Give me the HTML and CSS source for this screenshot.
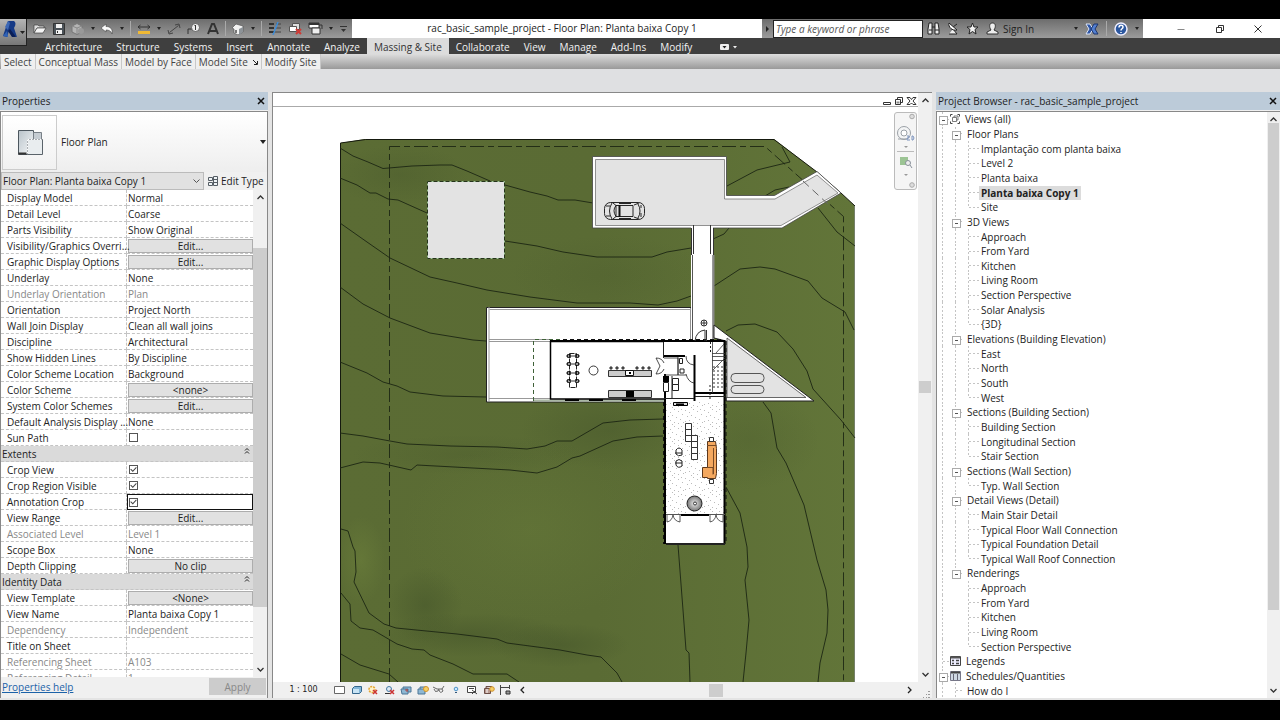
FILE: index.html
```html
<!DOCTYPE html>
<html lang="en">
<head>
<meta charset="utf-8">
<title>rac_basic_sample_project - Floor Plan: Planta baixa Copy 1</title>
<link rel="stylesheet" href="styles.css">
</head>
<body>
<div class="app">
<header class="titlebar">
  <div class="quick">
    <button class="appmenu" aria-label="Application menu"><svg width="26" height="26" viewBox="0 0 26 26"><path d="M3 17L8 2h6q3 2 0 7l3 9-5-1-3-5-2 6z" fill="#163a86"/><path d="M8 2L5 8l3 3 2-7z" fill="#3d68b5"/><path d="M10 10l6 8h-4l-4-6z" fill="#0b1f57"/><path d="M3 17l4-5 1 6z" fill="#2f62b5"/><path d="M20 12h5l-2.500 3z" fill="#222"/></svg></button>
    <button aria-label="Open"><svg width="14" height="12" viewBox="0 0 14 12"><path d="M1 10V2h4l1 1h5v2H4z" fill="#ddd" stroke="#444" stroke-width=".7"/><path d="M1 10l3-5h9l-3 5z" fill="#f4f4f4" stroke="#444" stroke-width=".7"/></svg></button>
    <button aria-label="Save"><svg width="12" height="12" viewBox="0 0 12 12"><path d="M.5.500h11v11H.5z" fill="#4b5258" stroke="#333"/><path d="M3 1h6v4H3zM3 7h6v4H3z" fill="#f1f1f1"/><path d="M4 8h1v2H4z" fill="#333"/></svg></button>
    <button aria-label="Synchronize"><svg width="14" height="12" viewBox="0 0 14 12"><path d="M1 3l5-2.500L11 3v6l-5 2.500L1 9z" fill="#b5b5b5" stroke="#777"/><path d="M1 3l5 2 5-2M6 5v6" fill="none" stroke="#888"/><circle cx="10" cy="8" r="3" fill="#999"/></svg></button>
    <span class="caret"></span>
    <button aria-label="Undo"><svg width="14" height="12" viewBox="0 0 14 12"><path d="M1 5l5-4v2.500c4 0 7 2 6 7.500-1-3-3-4-6-4V9z" fill="#fafafa" stroke="#444" stroke-width=".6"/></svg></button>
    <span class="caret"></span><span class="bar"></span>
    <button aria-label="Measure"><svg width="14" height="12" viewBox="0 0 14 12"><path d="M1 8h12v3H1z" fill="#f0b934"/><path d="M1 4h12M3.500 2L1 4l2.500 2M10.500 2L13 4l-2.500 2" fill="none" stroke="#333"/></svg></button>
    <span class="caret"></span>
    <button aria-label="Aligned dimension"><svg width="14" height="12" viewBox="0 0 14 12"><path d="M2.500 9.500l9-7M8 2l4-1 1 4M1 7l1 4 4-1" fill="none" stroke="#444"/></svg></button>
    <button aria-label="Tag by category"><svg width="14" height="12" viewBox="0 0 14 12"><path d="M1 11V6h4" fill="none" stroke="#333"/><circle cx="8.500" cy="4.500" r="4" fill="#eee" stroke="#444" stroke-width=".7"/><path d="M7.500 3l1-1v5" fill="none" stroke="#333"/></svg></button>
    <button aria-label="Text"><svg width="12" height="12" viewBox="0 0 12 12"><path d="M1 11L5 1h2l4 10M3 8h6" fill="none" stroke="#333" stroke-width="2"/></svg></button>
    <span class="bar"></span>
    <button aria-label="Default 3D view"><svg width="14" height="12" viewBox="0 0 14 12"><path d="M1 5l4-4 7 2v6l-5 3-4-2V6z" fill="#f2f2f2" stroke="#555" stroke-width=".7"/><path d="M8 6l4-2v5l-4 3z" fill="#8d9398"/><path d="M4 7h2v3H4z" fill="#777"/></svg></button>
    <span class="caret"></span><span class="bar"></span>
    <button aria-label="Thin lines"><svg width="14" height="13" viewBox="0 0 14 13"><path d="M1 2h5M1 6h5M1 10h5" stroke="#333" stroke-width="2"/><path d="M8 2h5M7 6h6M6 10h7" stroke="#444"/><path d="M10 0L5 13" stroke="#3f8dd8" stroke-width="1.500"/></svg></button>
    <button aria-label="Close hidden windows"><svg width="14" height="13" viewBox="0 0 14 13"><path d="M4.500 1.500h7v6h-7z" fill="#ddd" stroke="#555"/><path d="M1.500 4.500h7v5h-7z" fill="#fff" stroke="#555"/><path d="M8 7l5 5M13 7l-5 5" stroke="#cf3b36" stroke-width="2"/></svg></button>
    <button aria-label="Switch windows"><svg width="15" height="13" viewBox="0 0 15 13"><path d="M1 1h10v5H1z" fill="#fff" stroke="#333"/><path d="M1 1h10v2H1z" fill="#333"/><path d="M4 6h8v6H4z" fill="#eee" stroke="#333"/><path d="M11 3h3v4" fill="none" stroke="#333"/></svg></button>
    <span class="caret"></span>
    <button aria-label="Customize toolbar"><svg width="9" height="9" viewBox="0 0 9 9"><path d="M1 2.500h7" stroke="#333"/><path d="M2 5h5L4.500 8z" fill="#333"/></svg></button>
  </div>
  <h1>rac_basic_sample_project - Floor Plan: Planta baixa Copy 1</h1>
  <div class="info">
    <span class="arrow"></span>
    <input type="text" aria-label="Search" placeholder="Type a keyword or phrase">
    <button aria-label="Search"><svg width="13" height="13" viewBox="0 0 13 13"><path d="M1 12V7l1-6h3v11zM8 12V1h3l1 6v5zM5 5h3" fill="#eee" stroke="#222"/><path d="M2 8h3M8 8h4" stroke="#222"/></svg></button>
    <button aria-label="Subscription"><svg width="12" height="13" viewBox="0 0 12 13"><path d="M2 12h8L6 7M6 5l4-3" fill="#eee" stroke="#222"/><path d="M2 1c-1 4 3 8 8 7z" fill="#fff" stroke="#222"/></svg></button>
    <button aria-label="Favorites"><svg width="13" height="13" viewBox="0 0 13 13"><path d="M6.500 1l1.500 4h4L9 7.500l1 4.500-3.500-2.500L3 12l1-4.500L1 5h4z" fill="#f1f1f1" stroke="#222"/></svg></button>
    <button class="signin"><svg width="13" height="13" viewBox="0 0 13 13"><path d="M6.500 1C3 1 3 5 5 8l-4 2v2h11v-2L8 8c2-3 2-7-1.500-7z" fill="#eee" stroke="#333"/></svg>Sign In</button>
    <span class="caret"></span>
    <button aria-label="Exchange apps"><svg width="14" height="12" viewBox="0 0 14 12"><path d="M1 1h4l3 5-3 5H1l3-5z" fill="#2d55a5" stroke="#dce5f7"/><path d="M13 1H9L6 6l3 5h4l-3-5z" fill="#527fd1" stroke="#1d356d"/></svg></button>
    <span class="bar"></span>
    <button aria-label="Help"><svg width="14" height="14" viewBox="0 0 14 14"><circle cx="7" cy="7" r="6" fill="#2b579f" stroke="#eef" stroke-width="1.500"/><path d="M5 5.500c0-3 4-3 4-.5 0 2-2 1.500-2 3.500M7 10v1" fill="none" stroke="#fff" stroke-width="1.500"/></svg></button>
    <span class="caret"></span>
  </div>
  <div class="winbtns">
    <button aria-label="Minimize"><svg width="10" height="10" viewBox="0 0 10 10"><path d="M1.500 5.500h7" stroke="#888"/></svg></button>
    <button aria-label="Restore"><svg width="10" height="10" viewBox="0 0 10 10"><path d="M1.500 3.500h5v5h-5zM3.500 3V1.500h5v5H7" fill="none" stroke="#333"/></svg></button>
    <button aria-label="Close"><svg width="10" height="10" viewBox="0 0 10 10"><path d="M1.500 1.500l7 7M8.500 1.500l-7 7" stroke="#333"/></svg></button>
  </div>
</header>
<nav class="menu">
  <button>Architecture</button><button>Structure</button><button>Systems</button><button>Insert</button><button>Annotate</button><button>Analyze</button><button class="on">Massing &amp; Site</button><button>Collaborate</button><button>View</button><button>Manage</button><button>Add-Ins</button><button>Modify</button>
  <button class="ribbontoggle" aria-label="Minimize ribbon"><svg width="20" height="8" viewBox="0 0 20 8"><rect x="1" y="1" width="9" height="6" rx="1" fill="#eee"/><path d="M3.500 3h4l-2 2.500z" fill="#222"/><path d="M14 3h4l-2 2.500z" fill="#eee"/></svg></button>
</nav>
<div class="ribbon">
  <button>Select</button><button>Conceptual Mass</button><button>Model by Face</button><button>Model Site <svg width="5" height="5" viewBox="0 0 5 5"><path d="M0 0l4 4M4.500 1v3.500H1" fill="none" stroke="#222"/></svg></button><button>Modify Site</button>
</div>
<div class="options"></div>
<main class="work">
  <section class="panel props">
    <header class="panelhead"><h2>Properties</h2><button aria-label="Close properties"><svg width="8" height="8" viewBox="0 0 8 8"><path d="M1 1l6 6M7 1L1 7" stroke="#111" stroke-width="1.500"/></svg></button></header>
    <div class="propbody">
      <div class="type">
        <div class="thumb"><svg width="28" height="28" viewBox="0 0 28 28"><defs><linearGradient id="tg" x2="1" y2="1"><stop stop-color="#b9c3ca"/><stop offset="1" stop-color="#f6f8f9"/></linearGradient></defs><path d="M2.500 2.500h15v9h-6v15h-9z" fill="url(#tg)" stroke="#4c565e"/><path d="M17.500 4.500h8v7h-8z" fill="#c5ccd2" stroke="#788087"/><path d="M11.500 11.500h15v15h-15z" fill="#e9edef" stroke="#5a636a"/><path d="M11.500 11.500h15M11.500 11.500v15" stroke="#fff" stroke-dasharray="2 1"/><path d="M2.500 25.500h8" stroke="#333" stroke-width="2"/></svg></div>
        <span>Floor Plan</span><i class="caret"></i>
      </div>
      <div class="instance">
        <div class="selectbox"><select aria-label="Instance"><option>Floor Plan: Planta baixa Copy 1</option></select><svg width="7" height="5" viewBox="0 0 7 5"><path d="M.5.500l3 3 3-3" fill="none" stroke="#555"/></svg></div>
        <button class="edittype"><svg width="12" height="12" viewBox="0 0 12 12"><path d="M1.500 2.500h4v3h-4zM1.500 7.500h4v3h-4zM6.500 1.500h4v9h-4zM6.500 4.500h4M6.500 7.500h4" fill="#eef3f6" stroke="#555d64"/></svg>Edit Type</button>
      </div>
      <div class="gridwrap">
        <div class="gridclip">
        <table class="grid">
          <tr><th>Display Model</th><td>Normal</td></tr>
          <tr><th>Detail Level</th><td>Coarse</td></tr>
          <tr><th>Parts Visibility</th><td>Show Original</td></tr>
          <tr><th>Visibility/Graphics Overri...</th><td><button>Edit...</button></td></tr>
          <tr><th>Graphic Display Options</th><td><button>Edit...</button></td></tr>
          <tr><th>Underlay</th><td>None</td></tr>
          <tr class="dim"><th>Underlay Orientation</th><td>Plan</td></tr>
          <tr><th>Orientation</th><td>Project North</td></tr>
          <tr><th>Wall Join Display</th><td>Clean all wall joins</td></tr>
          <tr><th>Discipline</th><td>Architectural</td></tr>
          <tr><th>Show Hidden Lines</th><td>By Discipline</td></tr>
          <tr><th>Color Scheme Location</th><td>Background</td></tr>
          <tr><th>Color Scheme</th><td><button>&lt;none&gt;</button></td></tr>
          <tr><th>System Color Schemes</th><td><button>Edit...</button></td></tr>
          <tr><th>Default Analysis Display ...</th><td>None</td></tr>
          <tr><th><label for="sun">Sun Path</label></th><td><input id="sun" type="checkbox"></td></tr>
          <tr class="cat"><th colspan="2"><span>Extents<svg width="6" height="8" viewBox="0 0 6 8"><path d="M1 3.500l2-2 2 2M1 6.500l2-2 2 2" fill="none" stroke="#222"/></svg></span></th></tr>
          <tr><th><label for="crop">Crop View</label></th><td><input id="crop" type="checkbox" checked></td></tr>
          <tr><th><label for="region">Crop Region Visible</label></th><td><input id="region" type="checkbox" checked></td></tr>
          <tr class="focus"><th><label for="anno">Annotation Crop</label></th><td><input id="anno" type="checkbox" checked></td></tr>
          <tr><th>View Range</th><td><button>Edit...</button></td></tr>
          <tr class="dim"><th>Associated Level</th><td>Level 1</td></tr>
          <tr><th>Scope Box</th><td>None</td></tr>
          <tr><th>Depth Clipping</th><td><button>No clip</button></td></tr>
          <tr class="cat"><th colspan="2"><span>Identity Data<svg width="6" height="8" viewBox="0 0 6 8"><path d="M1 3.500l2-2 2 2M1 6.500l2-2 2 2" fill="none" stroke="#222"/></svg></span></th></tr>
          <tr><th>View Template</th><td><button>&lt;None&gt;</button></td></tr>
          <tr><th>View Name</th><td>Planta baixa Copy 1</td></tr>
          <tr class="dim"><th>Dependency</th><td>Independent</td></tr>
          <tr><th>Title on Sheet</th><td></td></tr>
          <tr class="dim"><th>Referencing Sheet</th><td>A103</td></tr>
          <tr class="dim"><th>Referencing Detail</th><td>1</td></tr>
        </table>
        </div>
        <div class="vscroll propv"><svg width="7" height="5" viewBox="0 0 7 5"><path d="M.5 4l3-3 3 3" fill="none" stroke="#333" stroke-width="1.300"/></svg><span class="track props-track"><i></i></span><svg width="7" height="5" viewBox="0 0 7 5"><path d="M.5 1l3 3 3-3" fill="none" stroke="#333" stroke-width="1.300"/></svg></div>
      </div>
      <footer><a href="#help">Properties help</a><button disabled>Apply</button></footer>
    </div>
  </section>

  <section class="view">
    <div class="viewcol">
      <div class="viewhead"><svg width="36" height="10" viewBox="0 0 36 10"><path d="M1.500 6.500h7v2h-7z" fill="#fff" stroke="#333"/><path d="M13.500 3.500h5v5h-5zM15.500 3V1.500h5v5H19" fill="#fff" stroke="#333"/><path d="M14.500 5.500h3v2h-3z" fill="#888"/><path d="M25 1.500h3l1.500 2 1.500-2h3L31 5l3 3.500h-3L29.500 7 28 8.500h-3L28 5z" fill="#fff" stroke="#333"/></svg></div>
      <div class="stage">
      <svg class="plan" viewBox="273 107 645 575" preserveAspectRatio="xMidYMid slice" role="img" aria-label="Site floor plan">
        <defs>
          <linearGradient id="land"><stop stop-color="#5b6c34"/><stop offset=".5" stop-color="#5a6b34"/><stop offset="1" stop-color="#627539"/></linearGradient>
          <radialGradient id="dark"><stop stop-color="#3c4c26" stop-opacity=".75"/><stop offset="1" stop-color="#3c4c26" stop-opacity="0"/></radialGradient>
          <radialGradient id="light"><stop stop-color="#74893f" stop-opacity=".75"/><stop offset="1" stop-color="#74893f" stop-opacity="0"/></radialGradient>
          <radialGradient id="ball"><stop stop-color="#eee"/><stop offset="1" stop-color="#777"/></radialGradient>
          <pattern id="dots" width="19" height="17" patternUnits="userSpaceOnUse"><path d="M1 2.500h1M5 4.500h1M9 1.500h1M13 3.500h1M17 6.500h1M3 8.500h1M7 7.500h1M11 9.500h1M15 11.500h1M1 13.500h1M5 12.500h1M9 14.500h1M13 15.500h1M18 14.500h1M7 16.500h1M16 1.500h1" stroke="#bbb"/></pattern>
          <g id="chairs"><path d="M567.500 354.500h3v3h-3zM575.500 354.500h3v3h-3z" fill="none" stroke="#000" stroke-width=".8"/><path d="M566 356h3M577 356h3M571 356h4" stroke="#000" stroke-width=".8"/></g>
          <g id="stool"><circle cx="611" cy="368" r="1.200" fill="#999" stroke="#000" stroke-width=".8"/></g>
          <clipPath id="siteclip"><path d="M340 143l25-4h409l43 33 24 21 14 13v480H340z"/></clipPath>
        </defs>
        <g clip-path="url(#siteclip)">
          <path d="M340 107h515v580H340z" fill="url(#land)"/>
          <ellipse cx="400" cy="175" rx="70" ry="30" fill="url(#dark)" opacity=".3"/>
          <ellipse cx="610" cy="275" rx="100" ry="40" fill="url(#dark)" opacity=".2"/>
          <ellipse cx="610" cy="430" rx="90" ry="40" fill="url(#dark)" opacity=".4"/>
          <ellipse cx="470" cy="455" rx="120" ry="20" fill="url(#dark)" opacity=".25"/>
          <ellipse cx="425" cy="605" rx="38" ry="38" fill="url(#dark)" opacity=".5"/>
          <ellipse cx="470" cy="635" rx="100" ry="22" fill="url(#dark)" opacity=".5"/>
          <ellipse cx="560" cy="645" rx="70" ry="22" fill="url(#dark)" opacity=".5"/>
          <ellipse cx="750" cy="440" rx="70" ry="50" fill="url(#dark)" opacity=".25"/>
          <ellipse cx="361" cy="560" rx="24" ry="44" fill="url(#light)" opacity=".5"/>
          <ellipse cx="530" cy="530" rx="130" ry="90" fill="url(#light)" opacity=".3"/>
        </g>
        <path d="M340.500 682V143l25-3.500H774l43 32.500 24 21 14 13" fill="none" stroke="#15190e"/>
        <path d="M854.500 206v476" stroke="#75806a"/>
        <path d="M389.500 682V146.500H765l78.500 70V682" fill="none" stroke="#1d2713" stroke-dasharray="14 4 6 4" stroke-width=".9"/>
        <g class="contour">
          <path d="M340 148l13 8 15 6 15 6.500 29-2.500 28-1h12l15 6 23 10M505 185l25 7 17 4 11 4h17l18 3"/>
          <path d="M340 178l17 7 13 8h6l12 6 10 1 29 13M505 241l32 5 26 6 34 5h55l15-5 24-4"/>
          <path d="M340 223l27 19 23 16 40 19 27 6 30 7 43 7 47 6h53l28 2 19-4 14-5"/>
          <path d="M340 287l23 17 27 14 40 15 43 7 13 1M340 362l27 11 16 9 14 4 13 6 33 4 43 1"/>
          <path d="M340 433l23 3 27 5 17 3 43 2 47 1 30 2 18-3 12-5h15l31-18 27-3 33-1"/>
          <path d="M340 468l23-6 17 1 31 7 6-5 93 5 27 3 20-6 15-9 8-2 33-15 24-4 26-1"/>
          <path d="M341 529l7 2 5 16 2 4 1 21-2 10 15 31 15 11 12 4 61 6 40 5 10 4 53 7 27 5 14 2 16 16 5 9"/>
          <path d="M341 593l9 11 1 17 9 7 13 2 24 14 15 5 12 1 6 5 23 9 20 10h34l12 8M341 654l19 11 29 9 9 8"/>
          <path d="M727 186l30-16 33-8-8-15M765 196l10-6 14-3M713 239l11-5 5-6M818 208l19 24 18 14"/>
          <path d="M714 286l26-17 20-2 15 2 33 12 14 17 23 14 9 18"/>
          <path d="M726 331l12-6 17-1 22 8 16 17 14 22 6 18 28 31 14 18"/>
          <path d="M763 402l8 11 6 35 9 15 18 42 13 55 9 30 2 20-1 23-7 30-2 19"/>
          <path d="M726 487l14 26 7 34 1 20-3 13 4 40-3 33-3 29M678 545l5 65 3 40 3 3 1 29"/>
        </g>
        <path d="M427.500 181.500h77v77h-77z" fill="#e3e3e3" stroke="#9fc795"/><path d="M427.500 181.500h77v77h-77z" fill="none" stroke="#26331b" stroke-dasharray="4 2"/>
        <path d="M592.500 156.500h134v39h48L817 171.500l24 21.500-59 35H592.500z" fill="#fff" stroke="#444" stroke-width=".8"/>
        <path d="M595.500 159.500h129v39.500h50.500L817 175l21 18-57 32.500H595.500z" fill="#e3e3e3" stroke="#777" stroke-width=".8"/>
        <path d="M803 181l27 25" stroke="#666" stroke-dasharray="8 5"/>
        <g fill="none" stroke="#111" stroke-width=".9"><rect x="604.500" y="202.500" width="40" height="17" rx="6"/><path d="M612 203q-5 8 0 16M606 206h4M606 216h4M616 205.500h17v11h-17zM613 203l3 2.500q-4 5 0 11l-3 2.500M634 205l5-2M634 217l5 2M638 204q4 7 0 14M619 203.500h12M619 218.500h12M641 205v3M641 213v4"/><path d="M619.500 205v12" stroke-width="2"/></g>
        <path d="M486.500 307.500H691V402H486.500z" fill="#fff" stroke="#222"/><path d="M489.500 309.500H691M489 307v94M489 339.500h61M489 341.500h61M489 398.500h61" fill="none" stroke="#999"/>
        <path d="M691 226h22v115h-22z" fill="#fff"/><path d="M691.500 228v27M693.500 225v29M713.500 228v27M710.500 225v29" stroke="#333"/><path d="M692.500 255v84M713 255v84" stroke="#555"/><path d="M713.500 255v84" stroke="#888" stroke-width="2"/>
        <path d="M714 325l100 76h-88v-60l-12-3z" fill="#fff" stroke="#222"/><path d="M727 338l79 59.500h-79z" fill="#e3e3e3" stroke="#444" stroke-width=".8"/>
        <g fill="none" stroke="#555"><rect x="731" y="373.500" width="33" height="9" rx="4"/><rect x="731" y="385.500" width="33" height="8" rx="4"/></g>
        <path d="M550 341h175v58H550z" fill="#fff"/><path d="M664 398h61v146h-61z" fill="#fff"/><path d="M666 402h58v112h-58z" fill="url(#dots)"/>
        <path d="M533.500 401v-61.500h30" fill="none" stroke="#3f6138" stroke-dasharray="4 3"/><path d="M563 339.500h160" stroke="#111" stroke-dasharray="4 3"/><path d="M534 400.500h130" stroke="#a9b7a4" stroke-width="2"/>
        <path d="M664 341.500H550.500V399H664" fill="none" stroke="#000" stroke-width="1.500"/><path d="M550 341h175" stroke="#000" stroke-width="2"/><path d="M565 400h14M589 400h14M622 400h14" stroke="#000" stroke-width="2"/>
        <path d="M665 374v170M724.500 341v203M694.500 355v46M695 393h30" fill="none" stroke="#000" stroke-width="2"/><path d="M666 544H725" stroke="#222" stroke-width="2"/><path d="M726 341v203M663.500 402v142" stroke="#111" stroke-dasharray="4 3"/>
        <path d="M663.500 342v16M664 356.500h21M672 398v-22M664 398.500h30M695 396.500h30" fill="none" stroke="#222"/><path d="M664 356h21" stroke="#000" stroke-width="2"/>
        <path d="M656 358q6 0 8 5M656 374q6 0 8-5M656 358l4 8-4 8M664 358h14v17h-14M678 357v18M686 356q0 8 8 9M686 374q2 8 8 9M678 375h8" fill="none" stroke="#222" stroke-width=".8"/>
        <path d="M663 376h6v6h-6z"/><path d="M672.500 378.500h6v6h-6zM672.500 384.500h6v6h-6zM663.500 382.500h5v9h-5zM679.500 358.500h3v5h-3zM680 369h4v4h-4z" fill="#fff" stroke="#222"/>
        <path d="M712.500 342v51M712 353.500h13M712 356.500h13M712 360.500h13M713 370l12-12M716 353l8-9" fill="none" stroke="#333" stroke-width=".8"/><path d="M713 367h11M713 371h11M713 375h11M713 379h11M713 383h11M713 387h11" stroke="#333" stroke-dasharray="2 2"/><path d="M710.500 342v12M710 385v15" stroke="#222" stroke-dasharray="2 2"/>
        <circle cx="704" cy="323" r="3" fill="#fff" stroke="#333"/><path d="M701 323h6M704 320v6M695 341q1-10 10-11v11M706.500 330v11" fill="none" stroke="#333"/>
        <path d="M569.500 353.500h7v34h-7z" fill="#fff" stroke="#222" stroke-dasharray="5 1"/><use href="#chairs"/><use href="#chairs" y="8"/><use href="#chairs" y="17"/><use href="#chairs" y="25"/>
        <circle cx="593.500" cy="370.500" r="4.500" fill="#fff" stroke="#222" stroke-width=".9"/>
        <path d="M608.500 370.500h43v6h-43zM608.500 390.500h43v7h-43z" fill="#ccc" stroke="#333"/><path d="M625.500 370.500h8v5h-8z" fill="#fff" stroke="#111"/><path d="M626 391h8v6h-8zM629 372h2v2h-2z"/>
        <use href="#stool"/><use href="#stool" x="6"/><use href="#stool" x="12"/><use href="#stool" x="26"/><use href="#stool" x="32"/><use href="#stool" x="38"/>
        <path d="M673.500 402.500h14v3h-14z" fill="#ddd" stroke="#000"/><path d="M676 404.500h8" stroke="#000" stroke-width="2"/>
        <path d="M685.500 423.500h6v6h-6zM685.500 429.500h6v6h-6zM685.500 435.500h6v6h-6zM691.500 435.500h6v6h-6zM691.500 441.500h6v6h-6zM691.500 447.500h6v6h-6zM691.500 453.500h6v6h-6z" fill="#fff" stroke="#333"/>
        <path d="M676 450q3-4 6 0v5q-4 2-6-1zM676 461q3-3 6 0v5q-4 3-6-1zM675 453h7M675 463h7" fill="#fff" stroke="#222"/>
        <path d="M707.500 441.500h8l1 7v25l-1 5h-8v-1h-5v-10h5z" fill="#f4a85f" stroke="#5c371c"/><path d="M713.500 448v26M707 445.500h9M707 467.500h6v7" fill="none" stroke="#7a4b25"/><path d="M709.500 437.500h4v4h-4zM709.500 479.500h4v4h-4z" fill="#fff" stroke="#333"/>
        <circle cx="694.500" cy="503.500" r="7.500" fill="url(#ball)" stroke="#222"/><circle cx="695" cy="503.500" r="1.500" fill="#fff" stroke="#333"/>
        <path d="M666 514.500h59" stroke="#555"/><path d="M681 515h28" stroke="#000" stroke-width="2"/><path d="M667 515v7q5-1 6-7 1 6 7 7v-7M710 515v7q5-1 6-7 1 6 7 7v-7" fill="none" stroke="#333" stroke-width=".8"/>
      </svg>
      <div class="navbar"><svg width="21" height="76" viewBox="0 0 21 76"><circle cx="17" cy="3.500" r="2.300" fill="#ddd" stroke="#aaa"/><circle cx="9" cy="20" r="6.500" fill="#f4f5f6" stroke="#9ba1a7"/><circle cx="9" cy="20" r="3" fill="#fff" stroke="#9ba1a7"/><path d="M3 26h8" stroke="#9ba1a7"/><path d="M12 23h2v2h-2v2h3M17 23v4h1q2-2 0-4z" fill="none" stroke="#7c93bd"/><path d="M9 33h4l-2 2zM9 61h4l-2 2z" fill="#999"/><path d="M2 38.500h17" stroke="#bbb"/><path d="M5 44h8v8H5z" fill="#9cc494"/><circle cx="13" cy="50" r="2.500" fill="#eee" stroke="#89919a"/><path d="M15 52l2 3" stroke="#89919a"/><circle cx="17" cy="72" r="2.300" fill="#ddd" stroke="#aaa"/></svg></div>
      </div>
    </div>
    <div class="vscroll viewv"><svg width="7" height="5" viewBox="0 0 7 5"><path d="M.5 4l3-3 3 3" fill="none" stroke="#333" stroke-width="1.300"/></svg><span class="track view-track"><i></i></span><svg width="7" height="5" viewBox="0 0 7 5"><path d="M.5 1l3 3 3-3" fill="none" stroke="#333" stroke-width="1.300"/></svg></div>
    <div class="viewfoot">
      <button class="scale">1 : 100</button>
      <div class="vctl">
        <button aria-label="Detail level"><svg width="12" height="10" viewBox="0 0 12 10"><path d="M.5 1.500h10v7H.5z" fill="#fff" stroke="#666"/></svg></button>
        <button aria-label="Visual style"><svg width="12" height="10" viewBox="0 0 12 10"><path d="M1.500 3.500l2-2h7v5l-2 2h-7z" fill="#82b6d9" stroke="#34668c"/><path d="M2 4h6v4H2z" fill="#c8e4f5"/></svg></button>
        <button aria-label="Sun path"><svg width="12" height="10" viewBox="0 0 12 10"><circle cx="5" cy="4.500" r="3" fill="#fff4c9" stroke="#e5a534" stroke-width="1.500" stroke-dasharray="2 1"/><path d="M6 5l4 4M10 5L6 9" stroke="#c33" stroke-width="1.500"/></svg></button>
        <button aria-label="Shadows"><svg width="12" height="10" viewBox="0 0 12 10"><circle cx="5" cy="4" r="2.500" fill="#dceaf5" stroke="#4679a3"/><path d="M1 8.500h6" stroke="#333"/><path d="M6 5l4 4M10 5L6 9" stroke="#c33" stroke-width="1.500"/></svg></button>
        <button aria-label="Crop view"><svg width="12" height="10" viewBox="0 0 12 10"><path d="M1 4h7v5H2zM3 4V2h8v5H8" fill="#8eb8d4" stroke="#4c7797"/><path d="M7 4v3M5 5h3" stroke="#a44"/></svg></button>
        <button aria-label="Show crop region"><svg width="12" height="10" viewBox="0 0 12 10"><path d="M1 4h7v5H1zM3 4V2h6" fill="#8eb8d4" stroke="#4c7797"/><circle cx="9" cy="4" r="2.500" fill="#f5cf66" stroke="#d3932b"/></svg></button>
        <button aria-label="Hide isolate"><svg width="12" height="10" viewBox="0 0 12 10"><path d="M0 2l4 2h5l2-3M1 4q1 4 4 2l1-2M6 5q1 4 4 1l-1-2" fill="none" stroke="#444" stroke-width=".8"/></svg></button>
        <button aria-label="Reveal hidden"><svg width="12" height="10" viewBox="0 0 12 10"><circle cx="6" cy="4" r="1.800" fill="#cdeaff" stroke="#4f94c9"/><path d="M5 7.500h2" stroke="#357"/></svg></button>
        <button aria-label="Temporary properties"><svg width="12" height="10" viewBox="0 0 12 10"><path d="M1.500 1.500h8v6h-8zM3 3.500h5" fill="#fff" stroke="#444"/><path d="M6 5l5 4M10 5l-4 4" stroke="#444"/></svg></button>
        <button aria-label="Analytical model"><svg width="12" height="10" viewBox="0 0 12 10"><path d="M1.500 3.500h6v5h-6zM3 3V1.500h6" fill="#b89a91" stroke="#6b4d45"/><path d="M4 4v4" stroke="#fff"/><circle cx="9" cy="4" r="2.300" fill="#f5cf66" stroke="#d3932b"/></svg></button>
        <button aria-label="Reveal constraints"><svg width="12" height="10" viewBox="0 0 12 10"><path d="M1.500 0v10M10.500 0v4M2 2.500h8" fill="none" stroke="#444"/><path d="M7 6h4v3H7z" fill="#999" stroke="#333"/></svg></button>
        <button aria-label="Scroll left"><svg width="12" height="10" viewBox="0 0 12 10"><path d="M8 2L5 5l3 3" fill="none" stroke="#222" stroke-width="1.300"/></svg></button>
      </div>
      <span class="hthumb"></span>
      <button class="right" aria-label="Scroll right"><svg width="6" height="8" viewBox="0 0 6 8"><path d="M1 1l3 3-3 3" fill="none" stroke="#222" stroke-width="1.300"/></svg></button>
      <svg class="grip" width="8" height="8" viewBox="0 0 8 8"><path d="M6 1h2v1H6zM4 4h1v1H4zM6 4h2v1H6zM1 7h1v1H1zM4 7h1v1H4zM6 7h2v1H6z" fill="#999"/></svg>
    </div>
  </section>

  <section class="panel browser">
    <header class="panelhead"><h2>Project Browser - rac_basic_sample_project</h2><button aria-label="Close browser"><svg width="8" height="8" viewBox="0 0 8 8"><path d="M1 1l6 6M7 1L1 7" stroke="#111" stroke-width="1.500"/></svg></button></header>
    <div class="treewrap">
      <ul class="tree">
        <li class="n1 open"><svg width="10" height="10" viewBox="0 0 10 10"><path d="M.5 2.500v-2h2M7.500.500h2v2M9.500 7.500v2h-2M2.500 9.500h-2v-2" fill="none" stroke="#444"/><path d="M2.500 3.500h4v4h-4zM4 3V2h4v4H7" fill="#fff" stroke="#444" stroke-width=".7"/></svg>Views (all)</li>
        <li class="n2 open">Floor Plans</li>
        <li class="n3">Implantação com planta baixa</li>
        <li class="n3">Level 2</li>
        <li class="n3">Planta baixa</li>
        <li class="n3"><b>Planta baixa Copy 1</b></li>
        <li class="n3 end">Site</li>
        <li class="n2 open">3D Views</li>
        <li class="n3">Approach</li>
        <li class="n3">From Yard</li>
        <li class="n3">Kitchen</li>
        <li class="n3">Living Room</li>
        <li class="n3">Section Perspective</li>
        <li class="n3">Solar Analysis</li>
        <li class="n3 end">{3D}</li>
        <li class="n2 open">Elevations (Building Elevation)</li>
        <li class="n3">East</li>
        <li class="n3">North</li>
        <li class="n3">South</li>
        <li class="n3 end">West</li>
        <li class="n2 open">Sections (Building Section)</li>
        <li class="n3">Building Section</li>
        <li class="n3">Longitudinal Section</li>
        <li class="n3 end">Stair Section</li>
        <li class="n2 open">Sections (Wall Section)</li>
        <li class="n3 end">Typ. Wall Section</li>
        <li class="n2 open">Detail Views (Detail)</li>
        <li class="n3">Main Stair Detail</li>
        <li class="n3">Typical Floor Wall Connection</li>
        <li class="n3">Typical Foundation Detail</li>
        <li class="n3 end">Typical Wall Roof Connection</li>
        <li class="n2 open stop">Renderings</li>
        <li class="n3 bare">Approach</li>
        <li class="n3 bare">From Yard</li>
        <li class="n3 bare">Kitchen</li>
        <li class="n3 bare">Living Room</li>
        <li class="n3 bare end">Section Perspective</li>
        <li class="n1"><svg width="11" height="10" viewBox="0 0 11 10"><path d="M.5.500h10v9H.5z" fill="#eef" stroke="#444"/><path d="M1 1.500h9" stroke="#555" stroke-width="2"/><path d="M2 4.500h2M2 7.500h2M6 4.500h3M6 7.500h3" stroke="#444" stroke-width="1.500"/></svg>Legends</li>
        <li class="n1 open"><svg width="11" height="10" viewBox="0 0 11 10"><path d="M.5.500h10v9H.5z" fill="#cfd9e4" stroke="#778"/><path d="M1 1.500h9" stroke="#444" stroke-width="2"/><path d="M3.500 3v6M7.500 3v6" stroke="#667"/></svg>Schedules/Quantities</li>
        <li class="n2">How do I</li>
      </ul>
      <div class="vscroll"><svg width="7" height="5" viewBox="0 0 7 5"><path d="M.5 4l3-3 3 3" fill="none" stroke="#333" stroke-width="1.300"/></svg><span class="track tree-track"><i></i></span><svg width="7" height="5" viewBox="0 0 7 5"><path d="M.5 1l3 3 3-3" fill="none" stroke="#333" stroke-width="1.300"/></svg></div>
    </div>
  </section>
</main>
</div>
</body>
</html>
```
FILE: styles.css
```css
* { box-sizing: border-box; }
body { margin: 0; background: #000; font: 10px/14px "Open Sans", "Noto Sans", sans-serif; color: #222; }
button, input, select { font: inherit; color: inherit; margin: 0; padding: 0; border: 0; background: none; border-radius: 0; }
h1, h2 { margin: 0; font: inherit; }
svg { display: block; flex: none; }
.app { height: 100vh; padding: 19px 0 20px; display: flex; flex-direction: column; }

.titlebar { display: flex; height: 19px; flex: none; background: #fff; }
.quick { width: 352px; display: flex; align-items: center; justify-content: space-between; padding-right: 4px; background: linear-gradient(#6d6d6d, #9b9b9b); }
.quick button { display: flex; }
.quick .appmenu { position: relative; z-index: 1; align-self: flex-start; width: 27px; height: 27px; background: linear-gradient(#b5b5b5, #777); border: solid #222; border-width: 0 1px 1px 0; }
.caret { border: solid transparent; border-width: 3px 2px 0; border-top-color: #222; width: 0; height: 0; }
.bar { width: 1px; height: 15px; background: #aaa; }
.titlebar h1 { flex: 1; text-align: center; line-height: 19px; padding-left: 10px; }
.info { width: 381px; display: flex; align-items: center; gap: 7px; padding: 0 4px; background: linear-gradient(#6d6d6d, #9b9b9b); }
.info button { display: flex; align-items: center; gap: 4px; white-space: nowrap; }
.info .arrow { border: solid transparent; border-width: 3px 0 3px 3px; border-left-color: #222; margin-right: -3px; }
.info input { width: 150px; height: 18px; background: #fff; border: 1px solid #222; padding: 0 2px; font-style: italic; margin-right: -3px; }
.info input::placeholder { color: #555; }
.info .signin { flex: 1; }
.winbtns { width: 137px; display: flex; align-items: center; justify-content: space-between; padding: 0 17px 0 33px; }

.menu { display: flex; height: 16px; flex: none; background: #3f3f3f; padding-left: 38px; color: #f2f2f2; line-height: 16px; }
.menu button { padding: 1px 7px 0; white-space: nowrap; }
.menu .on { background: #dcdcdc; color: #333; }
.menu .ribbontoggle { padding-left: 20px; }
.ribbon { display: flex; height: 15px; flex: none; background: linear-gradient(#ddd, #999); line-height: 15px; padding-left: 1px; color: #444; }
.ribbon button { display: flex; align-items: center; gap: 5px; padding: 1px 3px 0; background: #efefef; border-right: 1px solid #c8c8c8; white-space: nowrap; }
.options { height: 23px; flex: none; background: #dfe0e2; }

.work { flex: 1; min-height: 0; display: grid; grid-template-columns: 268px minmax(0, 1fr) 344px; gap: 4px; background: #e4e4e4; padding-bottom: 3px; }
.panel { display: flex; flex-direction: column; min-height: 0; min-width: 0; background: #f0f0f0; }
.panelhead { display: flex; align-items: center; justify-content: space-between; height: 18px; flex: none; background: #bccbd9; padding: 0 3px 0 2px; }
.panelhead button { display: flex; }
.propbody { flex: 1; min-height: 0; display: flex; flex-direction: column; margin-top: 1px; border: solid #888; border-width: 1px 1px 0; }
.type { display: flex; align-items: center; gap: 4px; height: 60px; flex: none; padding: 2px 1px; background: linear-gradient(#fff, #eee); }
.type span { flex: 1; }
.type .caret { border-width: 4px 3px 0; }
.thumb { width: 55px; height: 55px; display: grid; place-items: center; border: 1px solid #ccc; background: linear-gradient(#fff, #f1f1f1); }
.instance { display: flex; align-items: center; height: 18px; flex: none; }
.selectbox { position: relative; width: 203px; }
.selectbox select { appearance: none; display: block; width: 100%; height: 18px; padding-left: 1px; background: #e1e1e1; border: 1px solid #bbb; }
.selectbox svg { position: absolute; right: 4px; top: 7px; }
.edittype { display: flex; align-items: center; gap: 2px; padding-left: 3px; white-space: nowrap; }
.gridwrap { flex: 1; min-height: 0; display: flex; }
.gridclip { flex: 1; min-width: 0; overflow: hidden; background: #fff; }
.grid { width: 100%; border-spacing: 0; table-layout: fixed; line-height: 14px; }
.grid tr { height: 16px; }
.grid th, .grid td { height: 16px; padding: 0; font-weight: 400; text-align: left; white-space: nowrap; border-bottom: 1px dashed #c4c4c4; }
.grid th { padding-left: 6px; border-right: 1px dashed #c4c4c4; }
.grid td { padding-left: 1px; }
.grid td button { display: block; width: 100%; height: 14px; line-height: 12px; background: #e1e1e1; border: 1px solid #adadad; }
.grid .dim { color: #888; }
.grid .cat th { background: #dadada; padding-left: 1px; border-right: 0; }
.cat span { display: flex; justify-content: space-between; padding-right: 3px; }
.grid .focus td { border: 1px solid #111; padding-left: 0; }
.grid input { appearance: none; display: block; width: 9px; height: 9px; margin-left: 1px; border: 1px solid #555; background: #fff; }
.grid input:checked::before { content: ""; display: block; width: 7px; height: 7px; background: #444; clip-path: polygon(4% 50%, 14% 40%, 40% 66%, 86% 14%, 96% 24%, 40% 84%); }
.vscroll { width: 13px; flex: none; display: flex; flex-direction: column; align-items: center; padding: 5px 0; background: #f0f0f0; }
.propv { width: 14px; }
.track { flex: 1; width: 100%; display: flex; flex-direction: column; }
.track i { flex: 1; background: #cdcdcd; }
.props-track { padding: 48px 0 60px; }
.propbody footer { display: flex; align-items: center; justify-content: space-between; height: 21px; flex: none; padding: 0 1px 2px; }
.propbody a { color: #1b62a8; }
.propbody footer button { width: 57px; height: 17px; background: #ccc; color: #888; }

.view { display: grid; grid-template-columns: minmax(0, 1fr) 14px; grid-template-rows: minmax(0, 1fr) 16px; background: #fff; border: solid #888; border-width: 1px 0 0 1px; }
.viewcol { display: flex; flex-direction: column; min-height: 0; }
.viewhead { height: 14px; flex: none; display: flex; justify-content: flex-end; align-items: flex-end; border-bottom: 1px solid #aaa; }
.stage { flex: 1; min-height: 0; position: relative; }
.plan { width: 100%; height: 100%; }
.contour { fill: none; stroke: #1c2613; stroke-width: .9; }
.navbar { position: absolute; right: 1px; top: 5px; border: 1px solid #bbb; border-radius: 3px; background: #f5f5f5; }
.viewv { width: 14px; }
.view-track { padding: 278px 1px 279px; }
.viewfoot { grid-column: 1 / -1; display: flex; align-items: center; background: #f0f0f0; padding-right: 2px; }
.scale { width: 61px; font-family: "DejaVu Sans", sans-serif; font-size: 8px; }
.vctl { display: flex; justify-content: space-between; width: 194px; }
.vctl button { display: flex; }
.hthumb { width: 14px; height: 13px; background: #cdcdcd; margin-left: auto; margin-right: 184px; }
.right { margin-right: 9px; }
.grip { align-self: flex-end; }

.treewrap { flex: 1; min-height: 0; display: flex; margin-top: 1px; border: solid #888; border-width: 1px 0 0 1px; }
.tree { flex: 1; min-width: 0; margin: 0; padding: 0; list-style: none; display: grid; grid-auto-rows: minmax(0, 1fr); background: #fff; overflow: hidden;
  --v: repeating-linear-gradient(#c4c4c4 0 2px, #fff 2px 4px); --h: repeating-linear-gradient(90deg, #c4c4c4 0 2px, #fff 2px 4px); }
.tree li { position: relative; display: flex; align-items: center; gap: 5px; white-space: nowrap; background-repeat: no-repeat; }
.tree b { background: #dcdcdc; margin-left: -2px; padding: 0 2px; }
.n1 { padding-left: 13px; background-image: var(--v), var(--h); background-size: 1px 100%, 6px 1px; background-position: 5px 0, 6px 50%; }
.n2 { padding-left: 30px; background-image: var(--v), var(--v), var(--h); background-size: 1px 100%, 1px 100%, 8px 1px; background-position: 5px 0, 18px 0, 19px 50%; }
.n2.stop { background-size: 1px 100%, 1px 50%, 8px 1px; }
.n3 { padding-left: 44px; background-image: var(--v), var(--v), var(--v), var(--h); background-size: 1px 100%, 1px 100%, 1px 100%, 10px 1px; background-position: 5px 0, 18px 0, 31px 0, 32px 50%; }
.n3.end { background-size: 1px 100%, 1px 100%, 1px 50%, 10px 1px; }
.n3.bare { background-size: 1px 100%, 0 0, 1px 100%, 10px 1px; }
.n3.bare.end { background-size: 1px 100%, 0 0, 1px 50%, 10px 1px; }
.open::before { content: ""; position: absolute; left: 2px; top: 4px; width: 7px; height: 7px; border: 1px solid #aaa; background: linear-gradient(#555, #555) center / 3px 1px no-repeat #fff; }
.n2.open::before { left: 15px; }
.tree-track { padding: 1px 1px 78px; }
```
